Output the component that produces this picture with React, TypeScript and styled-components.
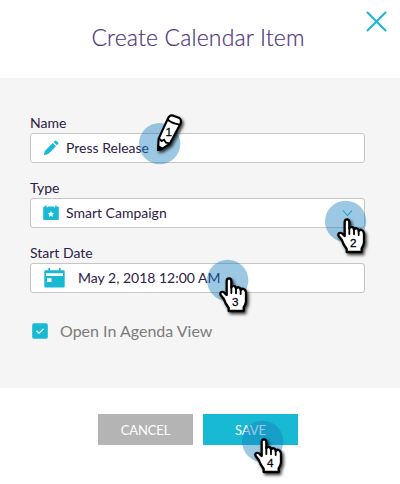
import React from "react";
import styled, { createGlobalStyle } from "styled-components";

const Global = createGlobalStyle`
  * { box-sizing: border-box; }
  body { margin: 0; background: #fff; font-family: Lato, "Liberation Sans", sans-serif; }
`;

const Dialog = styled.main`
  position: relative;
  width: 400px;
  height: 484px;
  overflow: hidden;
  background: #fff;
  display: flex;
  flex-direction: column;
`;

const Header = styled.header`
  height: 78px;
  flex: none;
  display: grid;
  grid-template-columns: 31px 1fr 35px;
  padding-top: 10px;
`;

const Title = styled.h1`
  margin: 11px 0 0;
  grid-column: 2;
  text-align: center;
  font-family: Lato, sans-serif;
  font-weight: 300;
  font-size: 23px;
  line-height: 32px;
  letter-spacing: 0.15px;
  color: #4f357e;
  -webkit-text-stroke: 0.2px #4f357e;
  white-space: nowrap;
`;

const CloseButton = styled.button`
  border: 0;
  padding: 0;
  background: none;
  width: 24px;
  height: 24px;
  svg { display: block; }
`;

const Body = styled.section`
  height: 310px;
  flex: none;
  background: #f5f5f5;
  padding: 35px 35px 0 30px;
`;

const Field = styled.div`
  height: 65px;
`;

const Label = styled.label`
  display: block;
  height: 20px;
  line-height: 19px;
  font-size: 14px;
  color: #2b2147;
`;

const Input = styled.div<{ $inset: number; $gap: number }>`
  height: 30px;
  border: 1px solid #c6c6c6;
  border-radius: 3px;
  background: #fff;
  display: flex;
  align-items: center;
  padding: 0 10px 0 ${(p) => p.$inset}px;
  gap: ${(p) => p.$gap}px;
  color: #2b2147;
  font-size: 14px;
  svg { flex: none; }
`;

const Value = styled.span`
  flex: 1;
  white-space: nowrap;
  padding-bottom: 2px;
`;

const CheckRow = styled.div`
  display: flex;
  align-items: center;
  height: 20px;
  margin-top: 13px;
  padding-left: 2px;
  gap: 12px;
  font-size: 16px;
  color: #7c7c7c;
`;

const Footer = styled.footer`
  display: flex;
  justify-content: center;
  gap: 10px;
  padding: 26px 4px 0 0;
`;

const Button = styled.button<{ $primary?: boolean }>`
  width: 95px;
  height: 31px;
  border: 0;
  padding: 0;
  background: ${(p) => (p.$primary ? "#18b9d3" : "#b4b4b4")};
  color: #fff;
  font-family: Lato, sans-serif;
  font-size: 13px;
  letter-spacing: -0.1px;
`;

const Marker = styled.svg<{ $x: number; $y: number }>`
  position: absolute;
  left: ${(p) => p.$x}px;
  top: ${(p) => p.$y}px;
  width: 70px;
  height: 70px;
  pointer-events: none;
  overflow: visible;
`;

const Drawing = styled.g`
  filter: drop-shadow(5px 6px 5px rgba(0, 0, 0, 0.75));
`;

const Digit = styled.text`
  font-family: "Liberation Sans", Arial, sans-serif;
  font-size: 35px;
  text-anchor: middle;
  fill: #000;
  stroke: #000;
  stroke-width: 0.8px;
`;

const TEAL = "#18b9d3";

const Halo = ({ cx, cy }: { cx: number; cy: number }) => (
  <circle cx={cx} cy={cy} r="62" fill="#137dbc" fillOpacity="0.42" />
);

function HandMarker({ x, y, n }: { x: number; y: number; n: number }) {
  return (
    <Marker $x={x} $y={y} viewBox="0 0 210 210">
      <Halo cx={83} cy={76} />
      <Drawing>
        <path
          d="M80 120V78Q80 70 87 70Q94 70 94 78V97Q97 92 102 93Q108 94 108 101Q111 96 116 97Q122 98 122 105Q126 100 131 102Q137 104 138 113V140Q137 148 131 157V168H86V159L77 145L72 133L62 120Q59 114 64 111Q70 109 75 115Z"
          fill="#fff"
          stroke="#000"
          strokeWidth="7"
          strokeLinejoin="round"
        />
        <path d="M94 96V114M108 100V115M122 104V117" stroke="#000" strokeWidth="5.5" fill="none" strokeLinecap="round" />
      </Drawing>
      <Digit x="106" y="153">{n}</Digit>
    </Marker>
  );
}

function PencilMarker() {
  return (
    <Marker $x={130} $y={105} viewBox="0 0 210 210">
      <Halo cx={89} cy={116} />
      <Drawing>
        <path
          d="M84 135L86 101L114 40Q119 29 130 32L148 39Q156 45 151 57L119 117L94 133Z"
          fill="#fff"
          stroke="#000"
          strokeWidth="6.5"
          strokeLinejoin="round"
        />
        <path d="M113 43Q121 53 148 59M87 100L95 108L102 104L108 113L119 115" fill="none" stroke="#000" strokeWidth="5.5" />
        <path d="M83 137L85 120L101 130Z" fill="#000" />
      </Drawing>
      <Digit x="116" y="92">1</Digit>
    </Marker>
  );
}

export default function App() {
  return (
    <>
      <Global />
      <Dialog>
        <Header>
          <Title>Create Calendar Item</Title>
          <CloseButton aria-label="Close">
            <svg width="24" height="24" viewBox="0 0 24 24">
              <path d="M2.5 2.5L20.5 20.5M20.5 2.5L2.5 20.5" stroke={TEAL} strokeWidth="2.1" strokeLinecap="round" />
            </svg>
          </CloseButton>
        </Header>
        <Body>
          <Field>
            <Label>Name</Label>
            <Input $inset={12} $gap={7}>
              <svg width="16" height="16" viewBox="0 0 16 16" fill={TEAL}>
                <path d="M.7 15.3L2 10.8L9.8 3L13 6.2L5.2 14Z M10.7 2.1L12 .8Q12.7.2 13.4.9L15.1 2.6Q15.8 3.3 15.1 4L13.9 5.3Z" />
              </svg>
              <Value>Press Release</Value>
            </Input>
          </Field>
          <Field>
            <Label>Type</Label>
            <Input $inset={12} $gap={7}>
              <svg width="16" height="16" viewBox="0 0 16 16">
                <path d="M1.3 1.5H2.4V.5H3.5V1.5Q4.3 3.3 5.1 1.5H10.7Q11.5 3.3 12.3 1.5V.5H13.4V1.5H14.5Q15.8 1.5 15.8 2.5V14Q15.8 15 14.8 15H1.2Q.2 15 .2 14V2.5Q.2 1.5 1.3 1.5Z" fill={TEAL} />
                <path d="M8 5.8L8.9 8L11.2 8.2L9.5 9.7L10.1 12L8 10.8L5.9 12L6.5 9.7L4.8 8.2L7.1 8Z" fill="#fff" />
              </svg>
              <Value>Smart Campaign</Value>
              <svg width="12" height="8" viewBox="0 0 12 8">
                <path d="M1 1.5L5.5 6.5L10 1.5" fill="none" stroke={TEAL} strokeWidth="1.1" />
              </svg>
            </Input>
          </Field>
          <Field>
            <Label>Start Date</Label>
            <Input $inset={13} $gap={13}>
              <svg width="21" height="20" viewBox="0 0 21 20">
                <path d="M5.2 0V4M15.8 0V4" stroke={TEAL} strokeWidth="1.7" />
                <path fillRule="evenodd" d="M1.5 2.3H19.5Q20.7 2.3 20.7 3.5V18.3Q20.7 19.5 19.5 19.5H1.5Q.3 19.5.3 18.3V3.5Q.3 2.3 1.5 2.3ZM2 5.2V8H19V5.2ZM3 10.3V14H7.5V10.3Z" fill={TEAL} />
              </svg>
              <Value>May 2, 2018 12:00 AM</Value>
            </Input>
          </Field>
          <CheckRow>
            <svg width="16" height="16" viewBox="0 0 16 16">
              <rect x=".2" y=".2" width="15.6" height="15.6" rx="1.8" fill={TEAL} />
              <path d="M4.4 7.7L7 10.1L11.6 5.8" fill="none" stroke="#fff" strokeWidth="1.2" />
            </svg>
            <Value>Open In Agenda View</Value>
          </CheckRow>
        </Body>
        <Footer>
          <Button>CANCEL</Button>
          <Button $primary>SAVE</Button>
        </Footer>
        <PencilMarker />
        <HandMarker x={317.7} y={196.3} n={2} />
        <HandMarker x={200} y={255} n={3} />
        <HandMarker x={235} y={415.6} n={4} />
      </Dialog>
    </>
  );
}
